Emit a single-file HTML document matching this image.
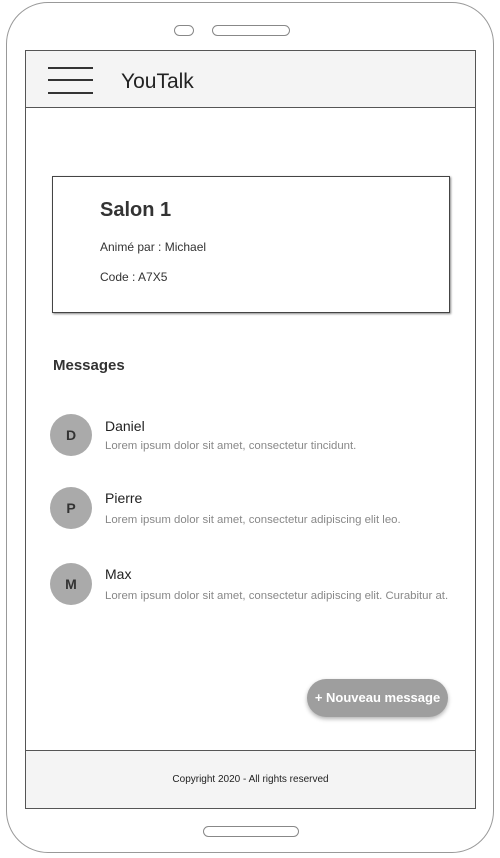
<!DOCTYPE html>
<html><head><meta charset="utf-8"><style>
*{margin:0;padding:0;box-sizing:border-box}
body{width:500px;height:858px;background:#fff;position:relative;overflow:hidden;font-family:"Liberation Sans",sans-serif;color:#333}
.a{position:absolute}
.phone{left:6px;top:2px;width:488px;height:851px;border:1.5px solid #999;border-radius:42px}
.pill{border:1.5px solid #888;border-radius:6px;height:11px}
.screen{left:25px;top:50px;width:451px;height:759px;border:1px solid #555;background:#fff}
.hdr{left:25px;top:50px;width:451px;height:58px;background:#f4f4f4;border:1px solid #555}
.bar{height:2px;background:#333;width:45px;left:48px}
.card{left:52px;top:176px;width:398px;height:137px;border:1px solid #444;box-shadow:1px 1px 2px #888}
.av{width:42px;height:42px;border-radius:50%;background:#aaa;left:50px;text-align:center;line-height:42px;font-weight:bold;font-size:14px;color:#333}
.nm{left:105px;font-size:14px;color:#222}
.tx{left:105px;font-size:11.4px;color:#888}
.btn{left:307px;top:679px;width:141px;height:38px;border-radius:19px;background:#9e9e9e;color:#fff;font-weight:bold;font-size:13px;line-height:38px;text-align:center;box-shadow:0 2px 4px rgba(0,0,0,.3)}
.ftr{left:25px;top:750px;width:451px;height:59px;background:#f4f4f4;border:1px solid #555;font-size:10px;text-align:center;line-height:57px;color:#222}
</style></head><body>
<div class="a phone"></div>
<div class="a pill" style="left:174px;top:25px;width:20px"></div>
<div class="a pill" style="left:212px;top:25px;width:78px"></div>
<div class="a screen"></div>
<div class="a hdr"></div>
<div class="a bar" style="top:67px"></div>
<div class="a bar" style="top:79px"></div>
<div class="a bar" style="top:92px"></div>
<div class="a" style="left:121px;top:70px;font-size:21px;color:#222">YouTalk</div>
<div class="a card"></div>
<div class="a" style="left:100px;top:199px;font-size:20px;font-weight:bold">Salon 1</div>
<div class="a" style="left:100px;top:240px;font-size:12px">Animé par : Michael</div>
<div class="a" style="left:100px;top:270px;font-size:12px">Code : A7X5</div>
<div class="a" style="left:53px;top:357px;font-size:15px;font-weight:bold">Messages</div>
<div class="a av" style="top:414px">D</div>
<div class="a nm" style="top:418px">Daniel</div>
<div class="a tx" style="top:440px">Lorem ipsum dolor sit amet, consectetur tincidunt.</div>
<div class="a av" style="top:487px">P</div>
<div class="a nm" style="top:490px">Pierre</div>
<div class="a tx" style="top:514px">Lorem ipsum dolor sit amet, consectetur adipiscing elit leo.</div>
<div class="a av" style="top:563px">M</div>
<div class="a nm" style="top:566px">Max</div>
<div class="a tx" style="top:590px">Lorem ipsum dolor sit amet, consectetur adipiscing elit. Curabitur at.</div>
<div class="a btn">+ Nouveau message</div>
<div class="a ftr">Copyright 2020 - All rights reserved</div>
<div class="a pill" style="left:203px;top:826px;width:96px"></div>
</body></html>
